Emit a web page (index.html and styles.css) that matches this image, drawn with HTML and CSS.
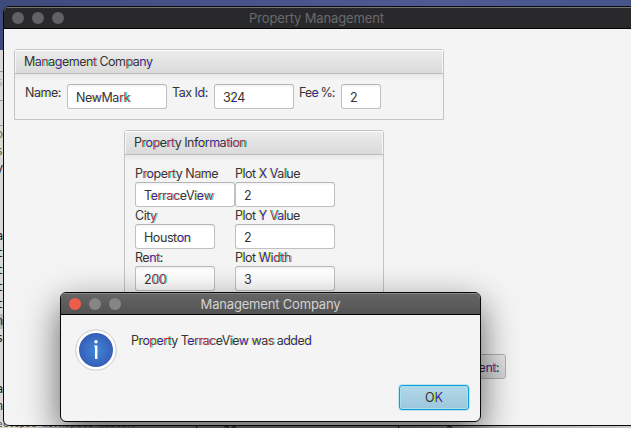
FILE: index.html
```
<!DOCTYPE html>
<html lang="en">
<head>
<meta charset="utf-8">
<title>Property Management</title>
<link rel="stylesheet" href="styles.css">
</head>
<body>
<div class="desktop">
  <div class="editor">
    <i class="rule r1"></i><i class="rule r2"></i><i class="rule r3"></i><i class="mark"></i>
    <span class="code c0">s</span>
    <span class="code c1 olive">o</span><span class="code c2 olive">s</span><span class="code c3">y</span>
    <span class="code c4">a</span><span class="code c5">t</span><span class="code c6">t</span><span class="code c7">t</span><span class="code c8">t</span>
    <span class="code c9">n</span><span class="code c10">s</span><span class="code c11">a</span><span class="code c12">n</span>
    <span class="code path olive">eclipse-workspace-master/</span>
    <span class="code num">20</span><span class="code num2">2</span>
    <i class="split s1"></i><i class="split s2"></i>
  </div>

  <section class="window main">
    <header class="titlebar"><span class="dots"><i></i><i></i><i></i></span><span class="title">Property Management</span></header>
    <div class="client">
      <div class="panel company">
        <h2 class="cap">M<b>a</b><u>n</u>a<b>g</b>e<b>m</b>e<b>n</b><u>t</u> Com<u>p</u>a<b>n</b><b>y</b></h2>
        <div class="row">
          <label class="l-name">N<b>a</b><b>m</b>e<b>:</b></label><div class="field f100">Ne<b>w</b>Ma<u>rk</u></div>
          <label class="l-tax">T<b>a</b>x I<b>d</b>:</label><div class="field f80">3<b>2</b>4</div>
          <label class="l-fee">Fe<b>e</b> %:</label><div class="field f40">2</div>
        </div>
      </div>
      <div class="panel property">
        <h2 class="cap">P<u>r</u><b>o</b><u>p</u>e<u>r</u><u>t</u>y Inf<b>o</b><b>r</b><b>m</b>a<u>t</u><b>i</b><u>on</u></h2>
        <div class="grid">
          <label>P<u>r</u><b>o</b>pe<u>rt</u>y N<u>a</u><b>m</b>e</label><label>P<b>l</b>ot <b>X</b> <b>V</b>a<u>l</u>ue</label>
          <div class="field f100">T<b>e</b><u>rra</u><u>c</u>eV<u>i</u><b>e</b><u>w</u></div><div class="field f100">2</div>
          <label>Cit<u>y</u></label><label>P<b>l</b>ot <b>Y</b> <u>V</u><b>a</b>lue</label>
          <div class="field f80">Houst<b>on</b></div><div class="field f100">2</div>
          <label>Re<b>n</b><u>t</u>:</label><label>P<b>l</b>ot <b>W</b><b>i</b><u>d</u><u>th</u></label>
          <div class="field f80">2<u>00</u></div><div class="field f100">3</div>
        </div>
      </div>
    </div>
    <div class="behind">e<b>n</b><u>t</u>:</div>
  </section>

  <section class="window dialog">
    <header class="titlebar"><span class="dots"><i></i><i></i><i></i></span><span class="title">Management Company</span></header>
    <div class="body">
      <div class="message">
        <svg width="42" height="42" viewBox="0 0 42 42">
          <defs><radialGradient id="g"><stop offset="0" stop-color="#4186d9"/><stop offset="1" stop-color="#365eb7"/></radialGradient></defs>
          <circle cx="21" cy="21" r="20.2" fill="#fff" stroke="#c9c9c9" stroke-width="1"/>
          <circle cx="21" cy="21" r="17" fill="url(#g)"/>
          <circle cx="21" cy="12.8" r="1.7" fill="#fff"/>
          <path d="M19.2 16.6H22.4V30H20V17.8H19.2Z" fill="#fff"/>
        </svg>
        <p>P<b>r</b><b>o</b><u>p</u><b>e</b><u>rt</u>y T<b>e</b><u>rra</u><u>c</u>eV<u>i</u>e<b>w</b> <b>w</b>a<u>s</u> a<b>d</b><b>d</b>e<b>d</b></p>
      </div>
      <button class="ok">O<b>K</b></button>
    </div>
  </section>
</div>
</body>
</html>
```

FILE: styles.css
```
* { box-sizing: border-box; }
body { margin: 0; overflow: hidden; font: 12.5px/17px Inter, sans-serif; letter-spacing: -.5px; color: #333; }
b, u, i { font-weight: inherit; font-style: normal; text-decoration: none; }
b { color: #2626b8; text-shadow: -1px 0 rgba(240, 232, 20, .9); }
u { color: #b82c38; text-shadow: 1px 0 rgba(0, 215, 215, .9); }

.desktop {
  position: relative; width: 631px; height: 428px; overflow: hidden;
  background: linear-gradient(90deg, #3d4a7b, #46528a 35%, #4f5a94 70%, #46548a);
}
.editor { position: absolute; inset: 50px 0 0 0; background: linear-gradient(90deg, #d9d8d5 0 10px, #aaa 60px, #888 100px, #888 400px, #aaa 500px, #b8b8b4 570px, #c8c8c4); }
.editor > * { position: absolute; }
.code { left: -4px; font: 12px/14px "DejaVu Sans Mono", monospace; letter-spacing: 0; color: #222; }
.olive { color: #7a6a38; }
.rule { left: 0; width: 4px; height: 1px; background: #999; }
.r1 { top: 21px; } .r2 { top: 50px; } .r3 { top: 75px; }
.mark { left: 0; top: 264px; width: 4px; height: 15px; background: #b5b5b3; }
.c0 { top: 25px; color: #aaa; }
.c1 { top: 77px; } .c2 { top: 94px; } .c3 { top: 111px; }
.c4 { top: 179px; } .c5 { top: 196px; } .c6 { top: 213px; } .c7 { top: 230px; } .c8 { top: 247px; }
.c9 { top: 264px; } .c10 { top: 281px; } .c11 { top: 332px; } .c12 { top: 349px; }
.path { top: 367px; left: -3px; font-size: 9.4px; color: #473f2d; }
.num { left: 223px; top: 374px; } .num2 { left: 446px; top: 374px; }
.split { top: 375px; width: 1px; height: 3px; background: #222; }
.s1 { left: 196px; } .s2 { left: 398px; }

.window { position: absolute; display: flex; flex-direction: column; border: 1px solid #090909; background: #f4f4f4; overflow: hidden; }
.titlebar { display: flex; align-items: center; flex: none; height: 22px; border-bottom: 1px solid #000; position: relative; }
.titlebar .title { flex: 1; text-align: center; font-size: 13px; line-height: 20px; padding-top: 1px; letter-spacing: -.13px; }
.dots { position: absolute; left: 8px; top: 5px; display: flex; gap: 8px; }
.dots i { width: 12px; height: 12px; border-radius: 50%; background: #626264; }

.main { left: 3px; top: 6px; width: 656px; height: 420px; border-radius: 6px; }
.main .titlebar { background: #29292b; box-shadow: inset 0 1px #777773; color: #69696b; padding-right: 29px; }
.client { display: flex; flex-direction: column; align-items: flex-start; padding: 20px 10px; gap: 10px; }
.panel { border: 1px solid #c4c4c4; border-radius: 3px 3px 0 0; }
.cap {
  margin: 0; height: 24px; padding: 3px 9px; font: inherit; line-height: 18px;
  border-bottom: 1px solid #bcbcbc; box-shadow: inset 0 1px #fff, inset -1px 0 #f5f5f5, inset 1px 0 #f5f5f5;
  background: linear-gradient(#ececec, #dadada); border-radius: 2px 2px 0 0;
}
.company { width: 430px; height: 71px; }
.property { width: 260px; height: 230px; margin-left: 110px; }
.row { display: flex; padding: 10px 10px; background: linear-gradient(#e8e8e8, #f4f4f4 6px); }
.l-name { width: 42px; } .l-tax { width: 42px; margin-left: 5px; } .l-fee { width: 42px; margin-left: 5px; }
.row label, .grid label { white-space: nowrap; }
.row label { letter-spacing: -.48px; }
.row .l-fee { letter-spacing: -.9px; }
.field { height: 25px; border: 1px solid #c0c0c0; border-top-color: #b5b5b5; border-radius: 3px; background: linear-gradient(#f3f3f3, #fff 3px); padding: 4px 8px 0; letter-spacing: -.42px; }
.f100 { width: 100px; } .f80 { width: 80px; } .f40 { width: 40px; }
.grid { display: grid; grid-template-columns: 100px 100px; grid-template-rows: 17px 25px 17px 25px 17px 25px; padding: 10px; background: linear-gradient(#e8e8e8, #f4f4f4 6px); }
.behind { position: absolute; left: 466px; top: 347px; width: 36px; height: 25px; padding: 4px 6px; text-align: right; border: 1px solid #b0b0b0; border-radius: 3px; background: linear-gradient(#e6e6e6, #d6d6d6); }

.dialog { left: 60px; top: 292px; width: 421px; height: 130px; border-radius: 6px; box-shadow: 0 13px 36px rgba(0, 0, 0, .62); }
.dialog .titlebar { background: linear-gradient(#666, #535353); box-shadow: inset 0 1px #888; color: #d2d2d2; }
.dialog .title { letter-spacing: -.18px; }
.dialog .dots i { background: #858585; }
.dialog .dots i:first-child { background: #ee5c4b; }
.body { display: flex; flex-direction: column; flex: 1; padding: 14px 11px 11px 14px; }
.message { display: flex; gap: 14px; flex: 1; }
.message p { margin: 3px 0 0; white-space: nowrap; letter-spacing: -.55px; }
.ok {
  align-self: flex-end; width: 70px; height: 25px; padding: 0; font: inherit; color: #333; border: 1px solid #109fd2; border-radius: 3px;
  background: linear-gradient(#b2d9e8, #9cc6dc); box-shadow: inset 0 0 0 1px #a9deef, 0 0 0 1px #bfe5f2;
}
```
